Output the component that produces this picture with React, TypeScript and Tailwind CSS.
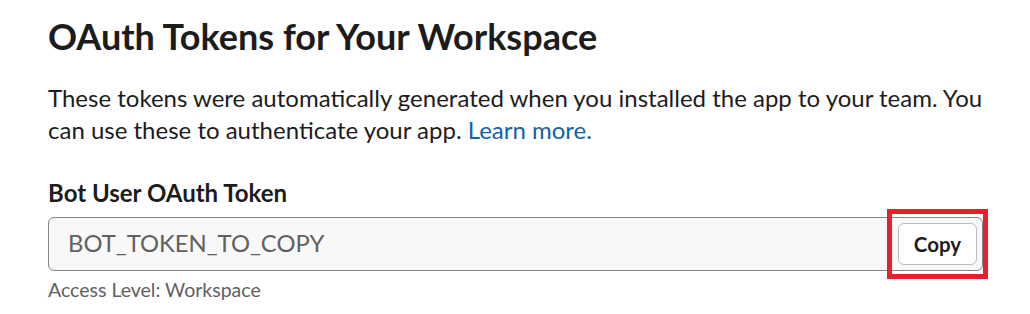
export default function App() {
  return (
    <div className="w-[1030px] h-[314px] bg-white font-['Lato',sans-serif] text-[#1d1c1d] pl-12 pr-[47px] pt-[14px] overflow-hidden">
      <h1 className="text-[36px] font-bold leading-[44px]">OAuth Tokens for Your Workspace</h1>
      <p className="mt-[24px] mr-[-6px] text-[24px] leading-[32px]">
        These tokens were automatically generated when you installed the app to your team. You can use these to
        authenticate your app. <a href="#" className="text-[#1264a3]">Learn more.</a>
      </p>
      <div className="mt-[33px] text-[24px] font-bold leading-[28px]">Bot User OAuth Token</div>
      <div className="relative mt-[10px] flex h-[54px] items-center rounded-md border border-[#868686] bg-[#f8f8f8] pl-[19px] pr-[5px]">
        <span className="flex-1 text-[23.8px] text-[#616061]">BOT_TOKEN_TO_COPY</span>
        <button className="h-[42px] w-[79px] rounded-md border border-[#bbbbbb] bg-white text-[20.5px] font-bold text-[#1d1c1d]">
          Copy
        </button>
        <div className="pointer-events-none absolute right-[-6px] top-[-9px] h-[70px] w-[101px] border-[5px] border-[#e8202a]" />
      </div>
      <div className="mt-[7px] text-[19.5px] leading-[24px] text-[#616061]">Access Level: Workspace</div>
    </div>
  );
}
